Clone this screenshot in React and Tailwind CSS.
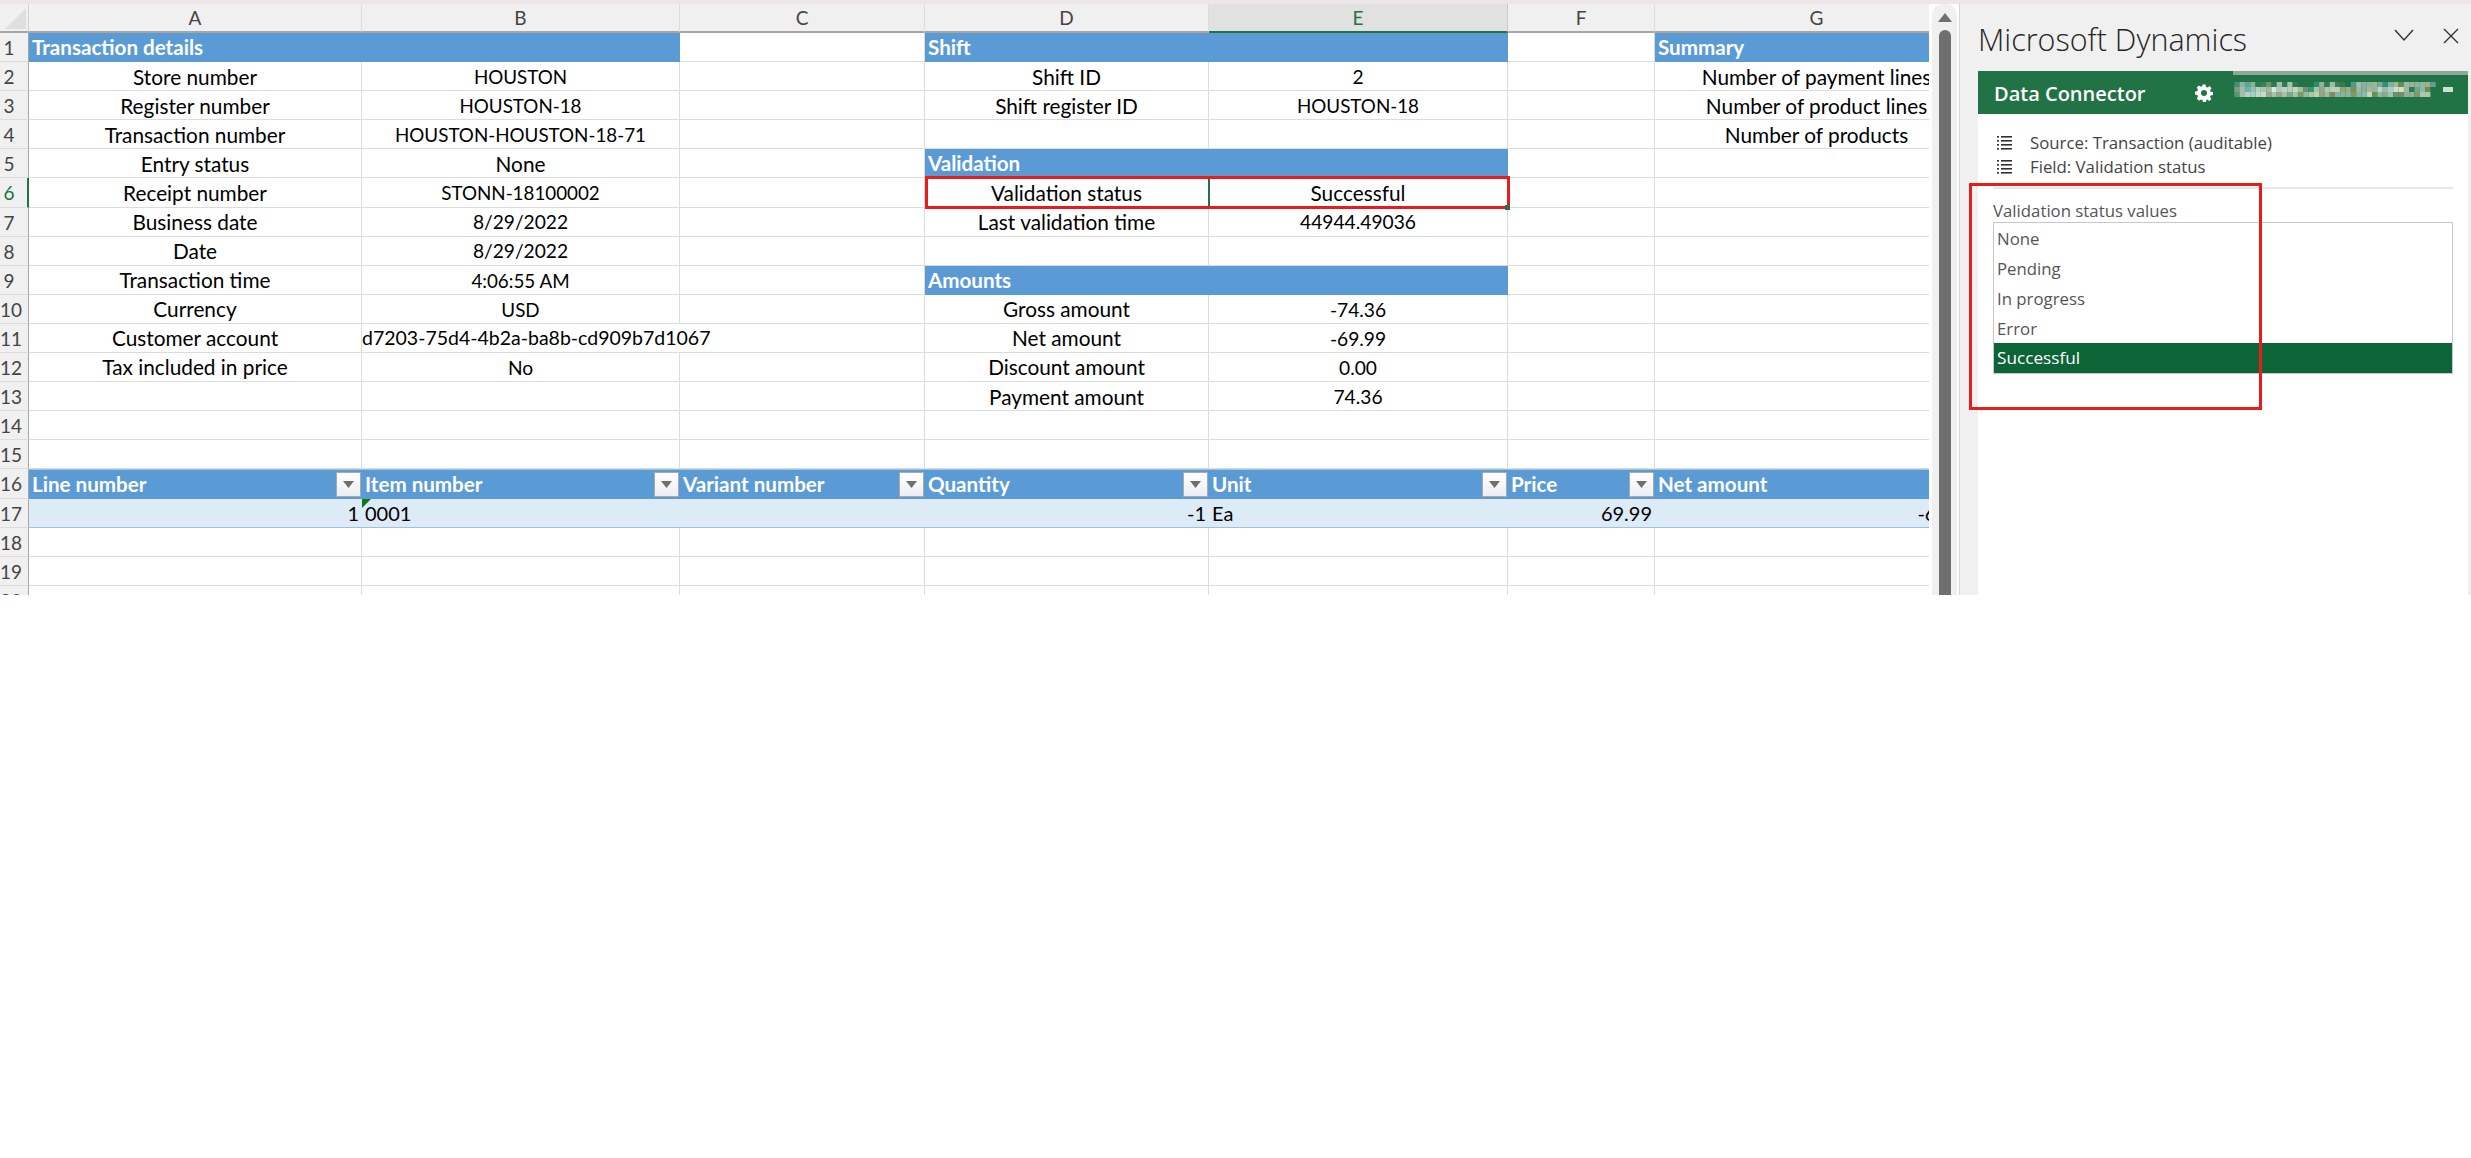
import React from "react";

const F = { fontFamily: '"Lato", "Liberation Sans", sans-serif' };

const cols = ["A", "B", "C", "D", "E", "F", "G"];

const rows = {
  1: { A: "Transaction details", D: "Shift", G: "Summary" },
  2: { A: "Store number", B: "HOUSTON", D: "Shift ID", E: "2", G: "Number of payment lines" },
  3: { A: "Register number", B: "HOUSTON-18", D: "Shift register ID", E: "HOUSTON-18", G: "Number of product lines" },
  4: { A: "Transaction number", B: "HOUSTON-HOUSTON-18-71", G: "Number of products" },
  5: { A: "Entry status", B: "None", D: "Validation" },
  6: { A: "Receipt number", B: "STONN-18100002", D: "Validation status", E: "Successful" },
  7: { A: "Business date", B: "8/29/2022", D: "Last validation time", E: "44944.49036" },
  8: { A: "Date", B: "8/29/2022" },
  9: { A: "Transaction time", B: "4:06:55 AM", D: "Amounts" },
  10: { A: "Currency", B: "USD", D: "Gross amount", E: "-74.36" },
  11: { A: "Customer account", D: "Net amount", E: "-69.99" },
  12: { A: "Tax included in price", B: "No", D: "Discount amount", E: "0.00" },
  13: { D: "Payment amount", E: "74.36" },
};

const blueCells = new Set(["1A", "1B", "1D", "1E", "1G", "5D", "5E", "9D", "9E"]);
const tableHeads = { A: "Line number", B: "Item number", C: "Variant number", D: "Quantity", E: "Unit", F: "Price", G: "Net amount" };
const tableRow = { A: ["1", "r"], B: ["0001", "l"], D: ["-1", "r"], E: ["Ea", "l"], F: ["69.99", "r"], G: ["-69.99", "r"] };

// Lowercase words run wider in the reference font than caps and digits do.
const textClass = (t) => {
  if (/[a-z]{2}/.test(t)) return "text-black text-[20.8px] whitespace-nowrap";
  if (/[A-Z]{2}/.test(t)) return "mt-[2px] text-black text-[18.8px] whitespace-nowrap";
  return "mt-[2px] text-black text-[19.2px] whitespace-nowrap";
};

const headClass = "text-white font-bold text-[20.6px] whitespace-nowrap";

function RowHead({ n }) {
  const active = n === 6;
  return (
    <div className={active ? "h-[29.1px] bg-[#f0f0f0] border-r-2 border-r-[#217346] border-b border-b-[#dcdcdc] overflow-hidden" : "h-[29.1px] bg-[#f0f0f0] border-r border-r-[#a6a6a6] border-b border-b-[#dcdcdc] overflow-hidden"}>
      <div className={active ? "w-[18px] text-center text-[19px] leading-[29px] text-[#217346]" : "w-[18px] text-center text-[19px] leading-[29px] text-[#444444]"} style={F}>
        {n}
      </div>
    </div>
  );
}

function FilterButton() {
  return (
    <div className="w-[25px] h-[25px] shrink-0 mr-[1px] border border-[#a9a9a9] bg-gradient-to-b from-white to-[#eeeef2] flex items-center justify-center">
      <svg width="11" height="7" viewBox="0 0 11 7"><path d="M0 0h11L5.5 7z" fill="#6f6f6f" /></svg>
    </div>
  );
}

function Cell({ r, c }) {
  const key = `${r}${c}`;
  const text = rows[r]?.[c];
  if (r === 16) {
    return (
      <div className="h-[29.1px] bg-[#5b9bd5] border-t border-t-[#9cc2e5] flex items-center justify-between pl-[3px] min-w-0">
        <span className={headClass} style={F}>{tableHeads[c]}</span>
        {c !== "G" && <FilterButton />}
      </div>
    );
  }
  if (r === 17) {
    const v = tableRow[c];
    return (
      <div className={v && v[1] === "r" ? "relative h-[29.1px] bg-[#ddebf7] border-b border-b-[#9bc2e6] flex items-center justify-end pr-[3px]" : "relative h-[29.1px] bg-[#ddebf7] border-b border-b-[#9bc2e6] flex items-center pl-[3px]"}>
        {c === "B" && (
          <svg className="absolute left-0 top-0" width="9" height="9" viewBox="0 0 9 9"><path d="M0 0h9L0 9z" fill="#0b7a16" /></svg>
        )}
        {v && <span className="text-black text-[20px] whitespace-nowrap" style={F}>{v[0]}</span>}
      </div>
    );
  }
  if (blueCells.has(key)) {
    return (
      <div className="h-[29.1px] bg-[#5b9bd5] flex items-center pl-[3px]">
        {text && <span className={headClass} style={F}>{text}</span>}
      </div>
    );
  }
  if (key === "11B") {
    return (
      <div className="relative z-10 h-[29.1px] border-b border-b-[#dcdcdc] flex items-center overflow-visible">
        <span className="text-black text-[19.5px] whitespace-nowrap" style={F}>d7203-75d4-4b2a-ba8b-cd909b7d1067</span>
      </div>
    );
  }
  return (
    <div className="h-[29.1px] border-r border-r-[#dcdcdc] border-b border-b-[#dcdcdc] flex items-center justify-center">
      {text && <span className={textClass(text)} style={F}>{text}</span>}
    </div>
  );
}

const mosaic = [
  ".. #3f8f7a #8fb5a0 #5fa3a0 #8fb08c #2f7a50 #3f7f55 #6f9468 #2f7a50 #9fbfa8 #2f7a50 #a5c5ac #2f7a50 .. .. .. #2f8a70 #93b498 #2f7a50 #a0bda0 #3f8058 #2f7a50 .. #4f9a98 #a0c0a8 #8fb0a0 #90b0a0 #a0b890 #80a8a0 #2f8f7a #80b0a8 #a8b890 #5f8f58 #a0b8a8 #a0b0a0 #98b098 #88b8a0 #a0b098 #5fa090",
  ".. #7f9f70 #a0c0b0 #70b0a8 #90c0b0 #b0d0c0 #a8c8b0 #a0b8a0 #d8e8d8 #b0c8b8 #c0d0c8 #b8d0b8 #c8d8c0 #a0c0a0 #70907a #2f9a80 #a8c4a0 #90a890 #b0c8b0 #b8d0c0 #b8d0c0 #90a870 #90b090 #7a8f50 #a0b8a0 #80b0a8 #a8b890 #90b8a8 #b8d8c8 #a0b8a0 #a8d0c8 #c8e0d0 #d8e0c0 #a0b8a0 #2f7a50 #70a898 #90b8a0 #6f8f50",
  ".. #5f9078 #a0c0a8 #b8d0c0 #a0d0c8 #c0d8c8 #d0d8c0 #98a890 #b0c0a8 #90a890 #a8c0a8 #80a888 #a8c0b0 #7a9a60 #98b8a0 #b0c8a0 #c0d0b0 #90a880 #a8b8a0 #7a9450 #90b0a0 #90b0a0 #90b0a0 #809a60 #90b0a0 #90b8a8 #c0d8c0 #6f8f50 #90b8a8 #88a898 #a0c0b0 #70906a #70906a #90b0a0 #90b0a0 #809a60 #a8c8b8 #a8c8b0",
];

function Blur() {
  return (
    <svg width="225" height="22" viewBox="0 0 225 22" className="shrink-0">
      {mosaic.map((row, y) =>
        row.split(" ").map((c, x) =>
          c.startsWith("#") ? <rect key={`${x}-${y}`} x={x * 5.3} y={y * 5 + 1} width="5.3" height="5" fill={c} /> : null
        )
      )}
      <rect x="214" y="6" width="10" height="5" fill="#d0e0d4" />
    </svg>
  );
}

function ListIcon() {
  return (
    <svg width="16" height="16" viewBox="0 0 16 16" className="shrink-0">
      {[1, 5, 9, 13].map((y) => (
        <g key={y}>
          <rect x="0" y={y} width="2" height="1.6" fill="#333333" />
          <rect x="4" y={y} width="11" height="1.6" fill="#333333" />
        </g>
      ))}
    </svg>
  );
}

const SEGOE = { fontFamily: '"Open Sans", "Noto Sans", sans-serif' };

export default function App() {
  const nums = Array.from({ length: 20 }, (_, i) => i + 1);
  return (
    <div className="relative w-[2471px] h-[1158px] bg-white overflow-hidden">
      <div className="h-1 bg-[#ece6e8]" />
      <div className="flex h-[591px]">
        {/* Sheet */}
        <div className="relative w-[1929px] shrink-0 overflow-hidden">
          <div className="grid w-[1979px] grid-cols-[29px_333px_318px_245px_284px_299px_147px_324px]">
            <div className="h-[29px] bg-[#f0f0f0] border-r border-r-[#d0d0d0] border-b-2 border-b-[#a6a6a6] flex items-start pl-[5px] pt-[4px]">
              <svg width="21" height="21" viewBox="0 0 21 21"><path d="M21 0v21H0z" fill="#dfdfdf" /></svg>
            </div>
            {cols.map((c) => (
              <div
                key={c}
                className={
                  c === "E"
                    ? "h-[29px] bg-[#e1e1e1] border-r border-r-[#c8c8c8] border-b-2 border-b-[#217346] text-center text-[19px] leading-[27px] text-[#217346]"
                    : "h-[29px] bg-[#f0f0f0] border-r border-r-[#dcdcdc] border-b-2 border-b-[#a6a6a6] text-center text-[19px] leading-[27px] text-[#444444]"
                }
                style={F}
              >
                {c}
              </div>
            ))}
            {nums.map((r) => (
              <React.Fragment key={r}>
                <RowHead n={r} />
                {cols.map((c) => (
                  <Cell key={c} r={r} c={c} />
                ))}
              </React.Fragment>
            ))}
          </div>

          {/* Active range marks and red callout lie over the sheet */}
          <div className="absolute left-[1208px] top-[174px] w-[2px] h-[30px] bg-[#217346]" />
          <div className="absolute left-[925px] top-[172px] w-[585px] h-[33px] border-[3px] border-[#e81c1c]" />
          <div className="absolute left-[1505px] top-[201px] w-[5px] h-[5px] bg-[#217346]" />
        </div>

        {/* Scrollbar */}
        <div className="ml-[3px] w-[25px] shrink-0 bg-[#f0f0f0] rounded-t-[10px] flex flex-col items-center pt-[9px]">
          <svg width="14" height="9" viewBox="0 0 14 9"><path d="M7 0l7 9H0z" fill="#707070" /></svg>
          <div className="mt-[8px] w-3 flex-1 bg-[#6f6f6f] rounded-t-md" />
        </div>
        <div className="w-[3px] shrink-0 border-r border-r-[#d4d4d4]" />

        {/* Task pane */}
        <div className="flex-1 min-w-0 bg-[#f0f0f0] flex flex-col pr-[3px]">
          <div className="h-[67px] shrink-0 flex items-start pl-[18px] pr-[9px]">
            <div className="flex-1 text-[30.5px] leading-[38px] mt-[16px] font-light text-[#262626]" style={SEGOE}>Microsoft Dynamics</div>
            <svg className="mt-[24px] mr-[29px]" width="20" height="14" viewBox="0 0 20 14"><path d="M1 2l9 10 9-10" fill="none" stroke="#333333" strokeWidth="1.4" /></svg>
            <svg className="mt-[24px]" width="16" height="16" viewBox="0 0 16 16"><path d="M1 1l14 14M15 1L1 15" fill="none" stroke="#333333" strokeWidth="1.4" /></svg>
          </div>
          <div className="ml-[18px] flex-1 bg-white flex flex-col">
            <div className="relative h-[43px] shrink-0 bg-[#217346] flex items-center pl-[16px]">
              <div className="absolute right-0 top-0 w-[235px] h-[4px] bg-[#8aa998]" />
              <span className="w-[201px] mt-[2px] text-white font-semibold text-[20px] whitespace-nowrap" style={SEGOE}>Data Connector</span>
              <svg width="18" height="18" viewBox="0 0 24 24" className="shrink-0">
                <path fillRule="evenodd" fill="#ffffff" d="M10 1h4l.6 3.1 2 .9 2.7-1.8 2.9 2.9L20 8.7l.9 2 3.1.6v4l-3.1.6-.9 2 1.8 2.700-2.900 2.900L17.200 21l-2 .9L14.600 25h-4l-.6-3.100-2-.9-2.700 1.800-2.900-2.900L4 17.200l-.9-2L0 14.600v-4l3.100-.6.9-2-1.800-2.700 2.900-2.900L7.800 4l2-.9zM12 8.500a4 4 0 1 0 0 8 4 4 0 0 0 0-8z" transform="translate(0 -.5)" />
              </svg>
              <div className="ml-[16px] -mt-[1px]"><Blur /></div>
            </div>
            <div className="px-[15px] pt-[17px] flex flex-col">
              <div className="h-[24px] flex items-center text-[16.8px] text-[#444444]" style={SEGOE}>
                <div className="w-[37px] pl-[4px]"><ListIcon /></div>
                <span className="whitespace-nowrap">Source: Transaction (auditable)</span>
              </div>
              <div className="h-[24px] flex items-center text-[16.8px] text-[#444444]" style={SEGOE}>
                <div className="w-[37px] pl-[4px]"><ListIcon /></div>
                <span className="whitespace-nowrap">Field: Validation status</span>
              </div>
              <div className="mt-[8px] h-[2px] bg-[#e8e8e8]" />
              <div className="mt-[11px] h-[22px] text-[16.8px] leading-[22px] text-[#555555]" style={SEGOE}>Validation status values</div>
              <div className="border border-[#c8c8c8] flex flex-col">
                {["None", "Pending", "In progress", "Error"].map((t) => (
                  <div key={t} className="h-[30px] pl-[3px] leading-[31px] text-[16.8px] text-[#555555]" style={SEGOE}>{t}</div>
                ))}
                <div className="h-[30px] pl-[3px] leading-[30px] text-[17.2px] text-white bg-[#0d6537]" style={SEGOE}>Successful</div>
              </div>
            </div>
          </div>
        </div>
      </div>

      {/* Red callout over the task pane */}
      <div className="absolute left-[1969px] top-[183px] w-[293px] h-[227px] border-[3px] border-[#e81c1c]" />
    </div>
  );
}
